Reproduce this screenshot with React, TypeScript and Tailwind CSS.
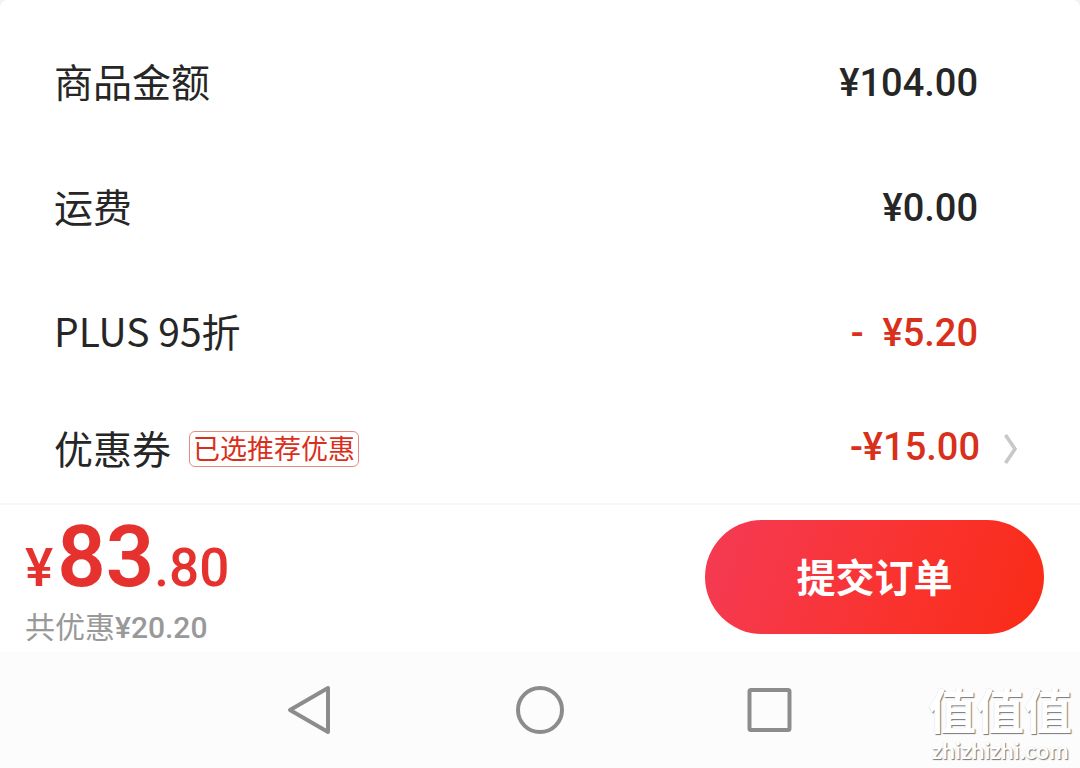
import clsx from "clsx";

type PriceRow = {
  label: string;
  amount: string;
  discount?: boolean;
};

const rows: PriceRow[] = [
  { label: "商品金额", amount: "¥104.00" },
  { label: "运费", amount: "¥0.00" },
  { label: "PLUS 95折", amount: "-  ¥5.20", discount: true },
];

const numberFont = "font-['Roboto','Noto_Sans_CJK_SC',sans-serif]";

function PriceList() {
  return (
    <section className="rounded-t-lg bg-white pt-5 pl-[54px]">
      <dl>
        {rows.map((row) => (
          <div
            key={row.label}
            className="flex h-[125px] items-center justify-between pr-[102px]"
          >
            <dt className="pb-1">{row.label}</dt>
            <dd
              className={clsx(
                numberFont,
                "text-[38px] font-medium whitespace-pre",
                row.discount && "text-[#d9301c]",
              )}
            >
              {row.amount}
            </dd>
          </div>
        ))}
      </dl>
      <button
        type="button"
        className="flex h-[108px] w-full items-center justify-between pr-[62px]"
      >
        <span className="flex items-center gap-[18px]">
          <span className="pb-1">优惠券</span>
          <span className="flex h-9 items-center rounded-md border border-[#e8897f] px-[3px] pb-1 text-[27px] leading-none text-[#d9301c]">
            已选推荐优惠
          </span>
        </span>
        <span className="flex items-center gap-6">
          <span
            className={clsx(
              numberFont,
              "pb-1 text-[38px] font-medium text-[#d9301c]",
            )}
          >
            -¥15.00
          </span>
          <svg
            viewBox="0 0 14 30"
            className="h-[30px] w-[14px]"
            fill="none"
            stroke="#c8c8c8"
            strokeWidth="3.6"
          >
            <path d="M1.5 1l9.5 14-9.5 14" />
          </svg>
        </span>
      </button>
    </section>
  );
}

function SubmitBar() {
  return (
    <section className="flex h-[149px] items-start justify-between border-t-2 border-[#f7f7f7] bg-white pt-[15px] pr-9 pl-[25px]">
      <div>
        <p
          className={clsx(
            numberFont,
            "text-[53px] leading-[74px] font-medium text-[#e5322f]",
          )}
        >
          ¥<span className="ml-1 text-[85px] font-semibold">83</span>.80
        </p>
        <p className="mt-1.5 text-[30px] leading-[28px] text-[#999]">
          共优惠
          <span className={clsx(numberFont, "font-medium")}>¥20.20</span>
        </p>
      </div>
      <button
        type="button"
        className="h-[114px] w-[339px] rounded-full bg-[linear-gradient(110deg,#f5394f_10%,#f93330_55%,#fa2c19_95%)] pb-1 font-bold text-white"
      >
        提交订单
      </button>
    </section>
  );
}

function NavBar() {
  const iconProps = {
    viewBox: "0 0 50 50",
    className: "size-[50px]",
    fill: "none",
    stroke: "#8c8c8c",
    strokeWidth: 4,
    strokeLinejoin: "round" as const,
  };

  return (
    <nav className="flex h-[116px] justify-center bg-[#fcfcfc]">
      <div className="grid w-[690px] grid-cols-3 place-items-center">
        <button type="button" aria-label="返回">
          <svg {...iconProps}>
            <path d="M43 3v44L5 25z" />
          </svg>
        </button>
        <button type="button" aria-label="主页">
          <svg {...iconProps}>
            <circle cx="25" cy="25" r="22" />
          </svg>
        </button>
        <button type="button" aria-label="最近任务">
          <svg {...iconProps}>
            <rect x="4.5" y="5" width="40" height="40" rx="1.5" />
          </svg>
        </button>
      </div>
    </nav>
  );
}

function Watermark() {
  return (
    <div className="pointer-events-none absolute right-2 bottom-1 text-center font-bold text-white [text-shadow:1px_1px_1px_#777,0_0_1px_#ddd]">
      <div className="text-[48px] leading-[56px]">值值值</div>
      <div className="font-['Lato','Noto_Sans_CJK_SC',sans-serif] text-[23px] leading-[28px]">
        zhizhizhi.com
      </div>
    </div>
  );
}

export default function App() {
  return (
    <main
      lang="zh-CN"
      className="relative bg-[#f2f2f2] font-['Noto_Sans_CJK_SC',sans-serif] text-[39px] leading-none text-[#262626]"
    >
      <PriceList />
      <SubmitBar />
      <NavBar />
      <Watermark />
    </main>
  );
}
